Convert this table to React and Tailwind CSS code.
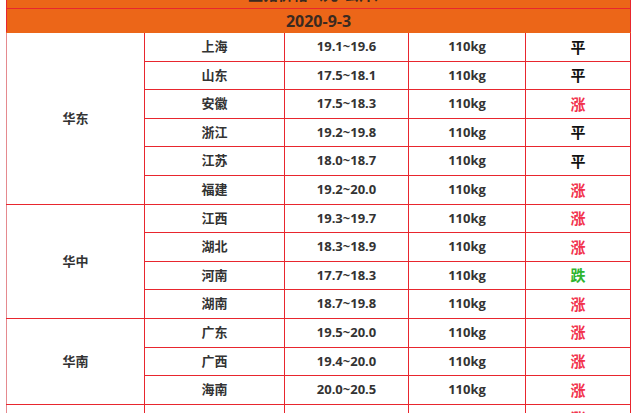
import React from 'react';

const groups = [
    {
        region: '华东',
        rows: [
            ['上海', '19.1~19.6', '平'],
            ['山东', '17.5~18.1', '平'],
            ['安徽', '17.5~18.3', '涨'],
            ['浙江', '19.2~19.8', '平'],
            ['江苏', '18.0~18.7', '平'],
            ['福建', '19.2~20.0', '涨']
        ]
    },
    {
        region: '华中',
        rows: [
            ['江西', '19.3~19.7', '涨'],
            ['湖北', '18.3~18.9', '涨'],
            ['河南', '17.7~18.3', '跌'],
            ['湖南', '18.7~19.8', '涨']
        ]
    },
    {
        region: '华南',
        rows: [
            ['广东', '19.5~20.0', '涨'],
            ['广西', '19.4~20.0', '涨'],
            ['海南', '20.0~20.5', '涨']
        ]
    },
    {
        region: '西南',
        rows: [
            ['四川', '19.8~20.4', '涨'],
            ['重庆', '19.6~20.2', '涨']
        ]
    }
];

const trendColor = {
    '平': 'text-[#111111]',
    '涨': 'text-[#f2334d]',
    '跌': 'text-[#2fb52f]'
};

const cell = 'border border-[#e8262e] text-center align-middle';

export default function App() {
    return (
        <div className="w-[640px] h-[413px] overflow-hidden bg-white">
            <div className="pl-[6px] pr-[9px] -mt-[21px]">
                <table
                    className="w-full border-collapse table-fixed font-bold text-[#333333] text-[13px]"
                    style={{fontFamily: '"Open Sans", "Noto Sans CJK SC", sans-serif'}}
                >
                    <colgroup>
                        <col className="w-[138px]"/>
                        <col className="w-[140px]"/>
                        <col className="w-[124px]"/>
                        <col className="w-[117px]"/>
                        <col/>
                    </colgroup>
                    <tbody>
                        <tr className="h-[29px] bg-[#ec6618]">
                            <td colSpan={5} className="border border-[#e8262e] text-center text-[15px] text-[#3a2a20] leading-none">
                                生猪价格（元/公斤）
                            </td>
                        </tr>
                        <tr className="h-[24px] bg-[#ec6618]">
                            <td colSpan={5} className="border border-[#e8262e] border-b-[#ec6618] text-center text-[16px] text-[#3a2a20] leading-none">
                                2020-9-3
                            </td>
                        </tr>
                        {groups.map(group => (
                            group.rows.map((row, i) => (
                                <tr key={group.region + row[0]} className="h-[28.6px]">
                                    {i === 0 && (
                                        <td rowSpan={group.rows.length} className={cell + ' border-l-[#e58a8f]'}>
                                            {group.region}
                                        </td>
                                    )}
                                    <td className={cell}>{row[0]}</td>
                                    <td className={cell}>{row[1]}</td>
                                    <td className={cell}>110kg</td>
                                    <td className={cell + ' text-[15px] ' + trendColor[row[2]]}>{row[2]}</td>
                                </tr>
                            ))
                        ))}
                    </tbody>
                </table>
            </div>
        </div>
    );
}
